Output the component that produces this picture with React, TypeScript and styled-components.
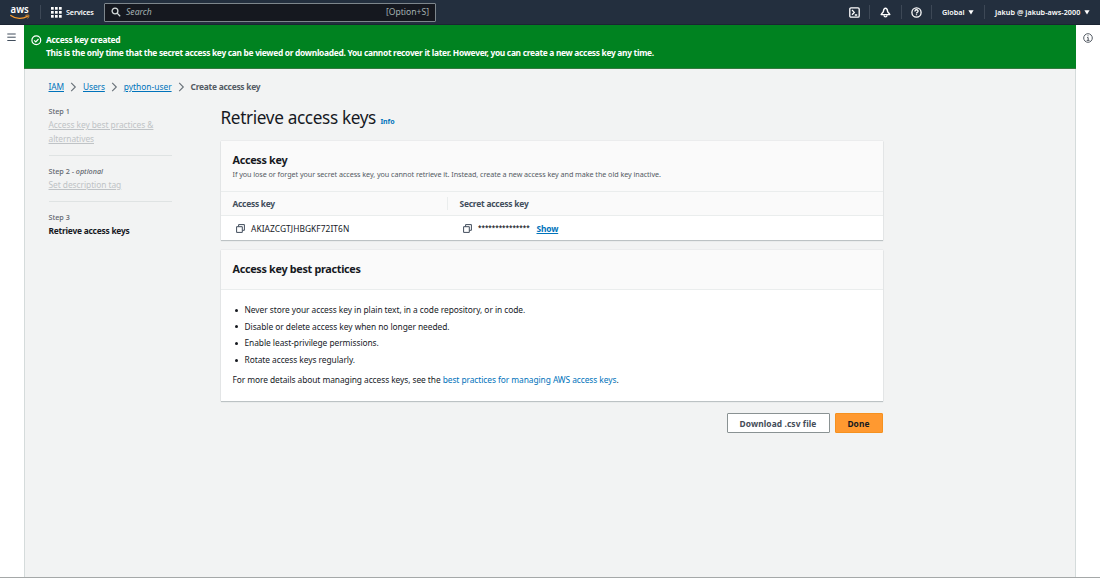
import React from 'react';
import styled, { createGlobalStyle } from 'styled-components';

const Global = createGlobalStyle`
  * { box-sizing: border-box; }
  html, body { margin: 0; padding: 0; }
  body {
    font-family: "Noto Sans", "Open Sans", sans-serif;
    font-size: 8.4px;
    color: #16191f;
    overflow: hidden;
    white-space: nowrap;
  }
  svg { display: block; flex: none; }
  a { color: #0073bb; text-decoration: none; }
`;

/* Inline run of text with optional tracking */
const Text = styled.span<{ $ls?: number }>`
  letter-spacing: ${(p) => p.$ls ?? 0}px;
`;

const Page = styled.div`
  width: 1100px;
  height: 578px;
  display: flex;
  flex-direction: column;
  background: #fff;
  border-bottom: 1px solid #a5a8a8;
`;

const TopBar = styled.header`
  height: 25px;
  flex: none;
  display: flex;
  align-items: center;
  background: #232f3e;
  border-bottom: 1px solid #1b2533;
  color: #fff;
  font-weight: 600;
  font-size: 7.2px;
`;
const LogoSlot = styled.div`
  width: 40px;
  padding-left: 10px;
`;
const BarDivider = styled.div`
  width: 1px;
  height: 14px;
  background: #3d4856;
`;
const Services = styled.div`
  width: 63px;
  padding-left: 10px;
  display: flex;
  align-items: center;
  gap: 4px;
`;
const SearchBox = styled.div`
  width: 332px;
  height: 19px;
  border: 1px solid #7d868c;
  border-radius: 1px;
  background: #15181f;
  display: flex;
  align-items: center;
  padding: 0 6px 0 6px;
  gap: 5px;
  font-size: 8.6px;
  font-weight: 400;
  color: #a4b1b1;
`;
const Placeholder = styled.span`
  flex: 1;
  font-style: italic;
`;
const BarRight = styled.div`
  margin-left: auto;
  display: flex;
  align-items: center;
`;
const BarItem = styled.div<{ $w: number; $pad?: number }>`
  width: ${(p) => p.$w}px;
  padding-left: ${(p) => p.$pad ?? 0}px;
  display: flex;
  align-items: center;
  justify-content: ${(p) => (p.$pad ? 'flex-start' : 'center')};
  gap: 3.5px;
`;

const Body = styled.div`
  flex: 1;
  display: flex;
`;
const SideRail = styled.aside<{ $pt: number; $pr?: number }>`
  width: 24px;
  padding: ${(p) => p.$pt}px ${(p) => p.$pr ?? 0}px 0 0;
  display: flex;
  justify-content: center;
  align-items: flex-start;
`;
const Main = styled.main`
  flex: 1;
  background: #f2f3f3;
  border: solid #d5dbdb;
  border-width: 0 1px;
  display: flex;
  flex-direction: column;
`;
const Flash = styled.div`
  height: 44px;
  margin: 0 -1px;
  padding: 8px 7px 0;
  display: flex;
  gap: 4px;
  background: #008220;
  border-bottom: 1px solid #34793f;
  color: #fff;
  font-weight: 700;
  font-size: 8.4px;
  line-height: 13.4px;
`;
const FlashIcon = styled.div`
  padding-top: 1.5px;
`;
const Crumbs = styled.nav`
  height: 35px;
  padding-left: 23.5px;
  display: flex;
  align-items: center;
  font-size: 8.4px;
  a { text-decoration: underline; }
  svg { margin: 0 6px; }
`;
const CurrentCrumb = styled.span`
  color: #545b64;
  font-weight: 700;
`;
const Content = styled.div`
  display: flex;
  padding-top: 1px;
`;
const Steps = styled.div`
  width: 195.5px;
  flex: none;
  padding-left: 23.5px;
`;
const Step = styled.div<{ $h: number }>`
  width: 123.5px;
  height: ${(p) => p.$h}px;
  padding-top: ${(p) => (p.$h === 51 ? 0 : 9)}px;
  line-height: 13.6px;
  border-bottom: ${(p) => (p.$h === 60 ? '0' : '1px solid #dfe3e3')};
`;
const StepLabel = styled.div`
  font-size: 7.2px;
  font-weight: 500;
  color: #5f666e;
  line-height: 13px;
`;
const StepLink = styled.div<{ $active?: boolean }>`
  font-size: 8.4px;
  font-weight: ${(p) => (p.$active ? 700 : 400)};
  letter-spacing: ${(p) => (p.$active ? -0.22 : -0.05)}px;
  color: ${(p) => (p.$active ? '#16191f' : '#bfc3c6')};
  text-decoration: ${(p) => (p.$active ? 'none' : 'underline')};
  white-space: pre-line;
`;
const Panel = styled.section`
  width: 662px;
`;
const Title = styled.h1`
  height: 36px;
  margin: 0;
  display: flex;
  align-items: baseline;
  gap: 4.5px;
  font-size: 17.2px;
  line-height: 26px;
  font-weight: 400;
  a { font-size: 7px; font-weight: 700; letter-spacing: -0.1px; }
`;
const Card = styled.div<{ $h: number }>`
  height: ${(p) => p.$h}px;
  margin-bottom: 10px;
  background: #fff;
  box-shadow: 0 1px 1px rgba(0, 28, 36, 0.2), 0 0 1px rgba(0, 28, 36, 0.18);
`;
const CardHeader = styled.div<{ $h: number }>`
  height: ${(p) => p.$h}px;
  padding: 10px 12px 0;
  background: #fafafa;
  border-bottom: 1px solid #eaeded;
`;
const CardTitle = styled.h2`
  margin: 0;
  font-size: 10.8px;
  line-height: 17px;
  font-weight: 700;
  letter-spacing: -0.3px;
`;
const CardNote = styled.div`
  padding-top: 0.5px;
  font-size: 7.2px;
  line-height: 11px;
  color: #545b64;
`;
const Row = styled.div<{ $head?: boolean }>`
  height: 24px;
  display: flex;
  align-items: center;
  background: ${(p) => (p.$head ? '#fafafa' : '#fff')};
  border-bottom: ${(p) => (p.$head ? '1px solid #eaeded' : '0')};
  color: ${(p) => (p.$head ? '#414d5c' : '#16191f')};
  font-weight: ${(p) => (p.$head ? 700 : 400)};
`;
const Cell = styled.div<{ $w?: number; $rule?: boolean; $pad: number }>`
  width: ${(p) => (p.$w ? `${p.$w}px` : 'auto')};
  height: 13px;
  padding-left: ${(p) => p.$pad}px;
  display: flex;
  align-items: center;
  gap: 6.5px;
  border-right: ${(p) => (p.$rule ? '1px solid #eaeded' : '0')};
  a { font-weight: 700; text-decoration: underline; letter-spacing: -0.15px; }
`;
const Masked = styled.span`
  width: 52px;
  font-size: 6.3px;
  line-height: 8px;
  font-weight: 600;
`;
const Tips = styled.ul`
  margin: 12px 0 3px;
  padding: 0;
  list-style: none;
  line-height: 16.6px;
`;
const Tip = styled.li`
  display: flex;
  align-items: center;
  gap: 7px;
  padding-left: 14px;
  letter-spacing: -0.055px;
  &::before {
    content: '';
    width: 3px;
    height: 3px;
    border-radius: 50%;
    background: #16191f;
  }
`;
const Footnote = styled.p`
  margin: 0;
  padding-left: 12px;
  line-height: 17px;
`;
const Actions = styled.div`
  margin-top: 12px;
  display: flex;
  justify-content: flex-end;
  gap: 5px;
`;
const Button = styled.button<{ $primary?: boolean }>`
  width: ${(p) => (p.$primary ? 48 : 103)}px;
  height: 20px;
  padding: 0;
  border: 1px solid ${(p) => (p.$primary ? '#f5911f' : '#8a9293')};
  border-radius: 1px;
  background: ${(p) => (p.$primary ? '#ff9930' : '#fff')};
  color: ${(p) => (p.$primary ? '#16191f' : '#444c58')};
  font: 700 8.4px "Noto Sans", sans-serif;
  letter-spacing: 0.1px;
`;

const AwsLogo = () => (
  <svg width="20" height="20" viewBox="0 -3 20 20">
    <text x="0.6" y="8.3" textLength="18.2" lengthAdjust="spacingAndGlyphs" fill="#fff" fontFamily="Noto Sans, sans-serif" fontSize="10.5" fontWeight="600">aws</text>
    <path d="M0.8 10.4c5.2 3.8 11.8 3.8 16.5 1" fill="none" stroke="#f79a2d" strokeWidth="1.3" strokeLinecap="round" />
    <path d="M15.9 10.3c1.2-.3 2.6-.4 2.9 0 .3.5-.2 1.9-.9 2.8" fill="none" stroke="#f79a2d" strokeWidth="0.9" strokeLinecap="round" />
  </svg>
);
const GridIcon = () => (
  <svg width="11" height="11" viewBox="0 0 11 11" fill="#fff">
    {[0, 4, 8].map((y) => [0, 4, 8].map((x) => <rect key={`${x}-${y}`} x={x} y={y} width="2.7" height="2.7" />))}
  </svg>
);
const SearchIcon = () => (
  <svg width="10" height="10" viewBox="0 0 10 10" fill="none" stroke="#d5dbdb" strokeWidth="1.3">
    <circle cx="4" cy="4" r="2.9" />
    <path d="M6.1 6.1L9.2 9.2" />
  </svg>
);
const ShellIcon = () => (
  <svg width="11" height="11" viewBox="0 0 11 11" fill="none" stroke="#fff" strokeWidth="1.3">
    <rect x="0.8" y="0.8" width="9.4" height="9.4" rx="1.2" />
    <path d="M3 3l2.3 2.4L3 7.8M5.8 8h2.4" />
  </svg>
);
const BellIcon = () => (
  <svg width="11" height="11" viewBox="0 0 11 11" fill="none" stroke="#fff" strokeWidth="1.4" strokeLinejoin="round">
    <path d="M5.5 1.2C3.9 1.2 3.6 2.7 3.4 4.3C3.2 5.5 1.8 6.3 1.2 7.6H9.8C9.2 6.3 7.8 5.5 7.6 4.3C7.4 2.7 7.1 1.2 5.5 1.2Z" />
    <path d="M4 8.2C4.2 10.4 6.8 10.4 7 8.2" />
  </svg>
);
const HelpIcon = () => (
  <svg width="11" height="11" viewBox="0 0 11 11" fill="none" stroke="#fff" strokeWidth="1.3">
    <circle cx="5.5" cy="5.5" r="4.6" />
    <path d="M3.9 4.4C3.9 2.2 7.1 2.3 7.1 4.2C7.1 5.3 5.5 5.2 5.5 6.5M5.5 7.2V8.3" />
  </svg>
);
const Caret = () => (
  <svg width="6" height="5" viewBox="0 0 6 5" fill="#fff"><path d="M0.4 0.3H5.6L3 4.5Z" /></svg>
);
const MenuIcon = () => (
  <svg width="9" height="9" viewBox="0 0 9 9" stroke="#414d5c" strokeWidth="1"><path d="M0.3 1H8.7M0.3 4.2H8.7M0.3 7.5H8.7" /></svg>
);
const InfoIcon = () => (
  <svg width="10" height="10" viewBox="0 0 10 10" fill="none" stroke="#545b64" strokeWidth="1">
    <circle cx="5" cy="5" r="4.3" />
    <path d="M5 2.3V3.3M4 4.6H5.2V7.3M3.7 7.4H6.5" />
  </svg>
);
const CheckIcon = () => (
  <svg width="11" height="11" viewBox="0 0 11 11" fill="none" stroke="#fff" strokeWidth="1.2">
    <circle cx="5.3" cy="5.3" r="4.4" />
    <path d="M3.2 5.3L4.8 6.9L7.5 4" />
  </svg>
);
const Chevron = () => (
  <svg width="7" height="10" viewBox="0 0 7 10" fill="none" stroke="#687078" strokeWidth="1.1"><path d="M1.2 0.9L5.3 5L1.2 9.1" /></svg>
);
const CopyIcon = () => (
  <svg width="9" height="9" viewBox="0 0 9 9" fill="none" stroke="#414d5c" strokeWidth="1">
    <path d="M2.6 2.6V.6H8.4V6.3H6.4" />
    <path d="M.6 2.7H6.3V8.4H.6Z" />
  </svg>
);

export default function App() {
  return (
    <>
      <Global />
      <Page>
        <TopBar>
          <LogoSlot><AwsLogo /></LogoSlot>
          <BarDivider />
          <Services><GridIcon /><Text $ls={-0.1}>Services</Text></Services>
          <SearchBox>
            <SearchIcon />
            <Placeholder>Search</Placeholder>
            <Text>[Option+S]</Text>
          </SearchBox>
          <BarRight>
            <BarItem $w={29}><ShellIcon /></BarItem>
            <BarDivider />
            <BarItem $w={31}><BellIcon /></BarItem>
            <BarDivider />
            <BarItem $w={29}><HelpIcon /></BarItem>
            <BarDivider />
            <BarItem $w={52} $pad={10}><Text>Global</Text><Caret /></BarItem>
            <BarDivider />
            <BarItem $w={115} $pad={10}><Text $ls={0.05}>Jakub @ jakub-aws-2000</Text><Caret /></BarItem>
          </BarRight>
        </TopBar>
        <Body>
          <SideRail $pt={8} $pr={1}><MenuIcon /></SideRail>
          <Main>
            <Flash>
              <FlashIcon><CheckIcon /></FlashIcon>
              <div>
                <div><Text $ls={-0.25}>Access key created</Text></div>
                <div><Text $ls={-0.295}>This is the only time that the secret access key can be viewed or downloaded. You cannot recover it later. However, you can create a new access key any time.</Text></div>
              </div>
            </Flash>
            <Crumbs>
              <a><Text $ls={-0.1}>IAM</Text></a><Chevron />
              <a><Text $ls={-0.1}>Users</Text></a><Chevron />
              <a><Text>python-user</Text></a><Chevron />
              <CurrentCrumb><Text $ls={-0.24}>Create access key</Text></CurrentCrumb>
            </Crumbs>
            <Content>
              <Steps>
                <Step $h={51}>
                  <StepLabel>Step 1</StepLabel>
                  <StepLink>{'Access key best practices &\nalternatives'}</StepLink>
                </Step>
                <Step $h={46}>
                  <StepLabel>Step 2 - <i>optional</i></StepLabel>
                  <StepLink>Set description tag</StepLink>
                </Step>
                <Step $h={60}>
                  <StepLabel>Step 3</StepLabel>
                  <StepLink $active>Retrieve access keys</StepLink>
                </Step>
              </Steps>
              <Panel>
                <Title><Text $ls={-0.36}>Retrieve access keys</Text><a>Info</a></Title>
                <Card $h={99}>
                  <CardHeader $h={51}>
                    <CardTitle>Access key</CardTitle>
                    <CardNote><Text $ls={-0.05}>If you lose or forget your secret access key, you cannot retrieve it. Instead, create a new access key and make the old key inactive.</Text></CardNote>
                  </CardHeader>
                  <Row $head>
                    <Cell $w={227} $pad={12} $rule><Text $ls={-0.25}>Access key</Text></Cell>
                    <Cell $pad={12}><Text $ls={-0.2}>Secret access key</Text></Cell>
                  </Row>
                  <Row>
                    <Cell $w={227} $pad={15}><CopyIcon /><Text $ls={0.06}>AKIAZCGTJHBGKF72IT6N</Text></Cell>
                    <Cell $pad={15}><CopyIcon /><Masked>***************</Masked><a>Show</a></Cell>
                  </Row>
                </Card>
                <Card $h={151}>
                  <CardHeader $h={40}><CardTitle>Access key best practices</CardTitle></CardHeader>
                  <Tips>
                    <Tip>Never store your access key in plain text, in a code repository, or in code.</Tip>
                    <Tip>Disable or delete access key when no longer needed.</Tip>
                    <Tip>Enable least-privilege permissions.</Tip>
                    <Tip>Rotate access keys regularly.</Tip>
                  </Tips>
                  <Footnote><Text $ls={-0.07}>For more details about managing access keys, see the <a>best practices for managing AWS access keys</a>.</Text></Footnote>
                </Card>
                <Actions>
                  <Button>Download .csv file</Button>
                  <Button $primary>Done</Button>
                </Actions>
              </Panel>
            </Content>
          </Main>
          <SideRail $pt={8}><InfoIcon /></SideRail>
        </Body>
      </Page>
    </>
  );
}
